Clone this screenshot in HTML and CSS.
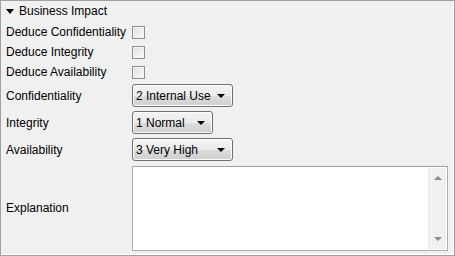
FILE: index.html
```html
<!DOCTYPE html>
<html lang="en">
<head>
    <meta charset="UTF-8">
    <title>Business Impact</title>
    <link rel="stylesheet" href="styles.css">
</head>
<body>
    <div class="panel">
        <div class="section-head">
            <span class="caret"></span>
            <span>Business Impact</span>
        </div>

        <div class="form-grid">
            <label class="lbl row-check">Deduce Confidentiality</label>
            <div class="row-check"><span class="check"></span></div>

            <label class="lbl row-check">Deduce Integrity</label>
            <div class="row-check"><span class="check"></span></div>

            <label class="lbl row-check">Deduce Availability</label>
            <div class="row-check"><span class="check"></span></div>

            <label class="lbl row-select">Confidentiality</label>
            <div class="row-select"><div class="combo w-wide">2 Internal Use<span class="arrow"></span></div></div>

            <label class="lbl row-select">Integrity</label>
            <div class="row-select"><div class="combo w-narrow">1 Normal<span class="arrow"></span></div></div>

            <label class="lbl row-select">Availability</label>
            <div class="row-select"><div class="combo w-wide">3 Very High<span class="arrow"></span></div></div>

            <label class="lbl row-text">Explanation</label>
            <div class="row-text">
                <div class="memo">
                    <div class="memo-body"></div>
                    <div class="scroll">
                        <span class="sarrow up"></span>
                        <span class="sarrow down"></span>
                    </div>
                </div>
            </div>
        </div>
    </div>
</body>
</html>
```

FILE: styles.css
```css
html, body {
    margin: 0;
    padding: 0;
    background: #f0f0f0;
}
.panel {
    box-sizing: border-box;
    width: 455px;
    height: 256px;
    border: 1px solid #a0a0a0;
    box-shadow: inset -1px -1px 0 #ffffff;
    background: #f0f0f0;
    font-family: "Liberation Sans", Arial, sans-serif;
    font-size: 12px;
    color: #000;
}
.section-head {
    display: flex;
    align-items: center;
    height: 20px;
    padding-left: 5px;
    gap: 5px;
}
.caret {
    width: 0;
    height: 0;
    border-left: 4px solid transparent;
    border-right: 4px solid transparent;
    border-top: 5px solid #000;
}
.form-grid {
    display: grid;
    grid-template-columns: 126px 1fr;
    padding-left: 5px;
    padding-top: 1px;
}
.lbl {
    display: flex;
    align-items: center;
}
.row-check {
    height: 20px;
    display: flex;
    align-items: center;
}
.row-select {
    height: 27px;
    display: flex;
    align-items: center;
}
.row-text {
    height: 86px;
    display: flex;
    align-items: center;
    padding-top: 2px;
}
.check {
    box-sizing: border-box;
    width: 13px;
    height: 13px;
    border: 1px solid #8e8f8f;
    background: linear-gradient(135deg, #dcdcdc, #fbfbfb);
    box-shadow: inset 0 0 0 1px #f4f4f4;
}
.combo {
    box-sizing: border-box;
    position: relative;
    height: 23px;
    border: 1px solid #707070;
    border-radius: 3px;
    background: linear-gradient(#f3f3f3 0%, #ebebeb 50%, #dddddd 51%, #cfcfcf 100%);
    box-shadow: inset 0 0 0 1px #fcfcfc;
    padding-left: 3px;
    display: flex;
    align-items: center;
}
.w-wide { width: 101px; }
.w-narrow { width: 81px; }
.arrow {
    position: absolute;
    right: 7px;
    top: 9px;
    width: 0;
    height: 0;
    border-left: 4px solid transparent;
    border-right: 4px solid transparent;
    border-top: 4px solid #000;
}
.memo {
    box-sizing: border-box;
    width: 316px;
    height: 85px;
    border: 1px solid #abadb3;
    border-top-color: #a0a0a0;
    background: #fff;
    display: flex;
}
.memo-body {
    flex: 1;
}
.scroll {
    width: 17px;
    margin: 1px 1px 1px 0;
    background: #f0f0f0;
    border-left: 1px solid #e8e8e8;
    display: flex;
    flex-direction: column;
    justify-content: space-between;
    align-items: center;
    padding: 8px 0;
}
.sarrow {
    width: 0;
    height: 0;
    border-left: 4px solid transparent;
    border-right: 4px solid transparent;
}
.sarrow.up { border-bottom: 4px solid #8a8a8a; }
.sarrow.down { border-top: 4px solid #8a8a8a; }
```
